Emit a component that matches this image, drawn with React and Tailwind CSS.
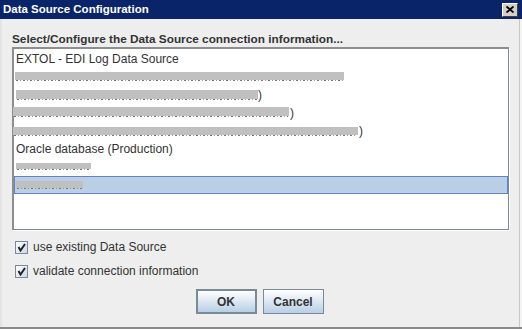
import { useState } from "react";

// redacted rows: bar = [left, top, width, height] inside the row
const rows = [
  { text: "EXTOL - EDI Log Data Source" },
  { bar: [0, 3, 329, 8] },
  { bar: [1, 3, 242, 9], tail: ")", tailX: 243 },
  { bar: [-2, 2, 276, 9], tail: ")", tailX: 275 },
  { bar: [-2, 4, 345, 8], tail: ")", tailX: 344 },
  { text: "Oracle database (Production)" },
  { bar: [1, 4, 75, 6] },
  { bar: [1, 4, 67, 7] },
];

function CheckBox({ label }) {
  return (
    <label className="flex h-[24px] items-center gap-[5px]">
      <span className="flex h-[13px] w-[13px] items-center justify-center border border-[#7a8a99] bg-gradient-to-br from-white to-[#c9d8e8]">
        <svg width="9" height="9" viewBox="0 0 9 9">
          <path d="M1.5 4 L3.5 7.5 L8 1" fill="none" stroke="#222" strokeWidth="2" />
        </svg>
      </span>
      <span className="text-[12px] text-[#333]">{label}</span>
    </label>
  );
}

export default function App() {
  const [selected, setSelected] = useState(7);

  return (
    <div
      className="flex h-[329px] w-[522px] flex-col border-b-2 border-b-[#8a8a8a] bg-[#eeeeee]"
      style={{ fontFamily: '"Liberation Sans", Arial, sans-serif' }}
    >
      <div className="flex h-[19px] items-center justify-between bg-[#0a246a] pl-[3px] pr-[4px]">
        <span className="text-[11.5px] font-bold text-white">Data Source Configuration</span>
        <button className="flex h-[14px] w-[16px] items-center justify-center border-t border-l border-t-white border-l-white border-r border-b border-r-[#404040] border-b-[#404040] bg-[#d4d0c8]">
          <svg width="8" height="7" viewBox="0 0 8 7">
            <path d="M0.5 0.5 L7.5 6.5 M7.5 0.5 L0.5 6.5" stroke="#000" strokeWidth="1.8" />
          </svg>
        </button>
      </div>

      <div className="flex flex-1 border-l-2 border-l-[#e4e4e4] border-r-[3px] border-r-[#f4f4f4]">
        <div className="flex flex-1 flex-col border-r border-r-[#c8c8c8] pl-[10px] pr-[10px] pt-[12px]">
          <div className="h-[16px] text-[11.8px] font-bold leading-[16px] text-[#333]">
            Select/Configure the Data Source connection information...
          </div>

          <div className="h-[183px] w-[497px] border-t-2 border-l-2 border-t-[#8e8e8e] border-l-[#8e8e8e] border-r border-b border-r-[#7a8a99] border-b-[#7a8a99] bg-white pt-[1px] shadow-[1px_1px_0_#ffffff]">
            {rows.map((r, i) => (
              <div
                key={i}
                onClick={() => setSelected(i)}
                className={
                  "relative h-[18px] text-[12px] leading-[17px] text-[#333] " +
                  (selected === i ? "border border-[#6382bf] bg-[#b8cfe5]" : "border border-transparent")
                }
              >
                {r.text && <span className="pl-[1px]">{r.text}</span>}
                {r.bar && (
                  <>
                    <span
                      className="absolute h-[1px] bg-[repeating-linear-gradient(90deg,#777_0_2px,transparent_2px_4px,#999_4px_5px,transparent_5px_7px)]"
                      style={{ left: r.bar[0] + 1, width: r.bar[2] - 2, top: r.bar[1] + r.bar[3] }}
                    />
                    <span
                      className="absolute bg-[#c0c0c0]"
                      style={{ left: r.bar[0], width: r.bar[2], top: r.bar[1], height: r.bar[3] }}
                    />
                  </>
                )}
                {r.tail && (
                  <span className="absolute top-0" style={{ left: r.tailX }}>
                    {r.tail}
                  </span>
                )}
              </div>
            ))}
          </div>

          <div className="mt-[5px] flex flex-col pl-[3px]">
            <CheckBox label="use existing Data Source" />
            <CheckBox label="validate connection information" />
          </div>

          <div className="mt-[6px] flex justify-center gap-[6px] pr-[2px]">
            <button className="h-[25px] w-[61px] border-2 border-[#7a8a99] bg-gradient-to-b from-white to-[#b8cfe5] text-[12px] font-bold text-[#333]">
              OK
            </button>
            <button className="h-[25px] w-[61px] border border-[#7a8a99] bg-gradient-to-b from-white to-[#b8cfe5] text-[12px] font-bold text-[#333]">
              Cancel
            </button>
          </div>
        </div>
      </div>
    </div>
  );
}
